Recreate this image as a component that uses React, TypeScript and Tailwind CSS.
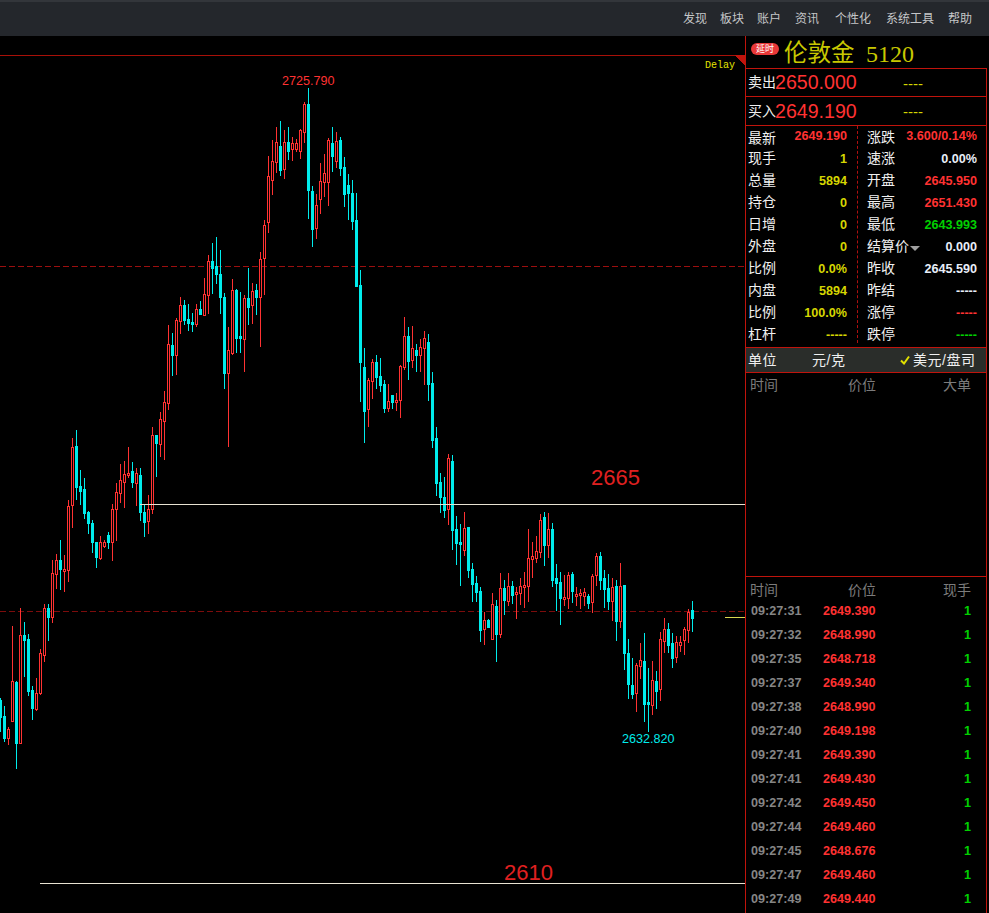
const RAW = `c 698 700 717 731
c 706 716 738 741
r 727 729 738 744
r 626 681 721 721
c 681 682 743 768
r 608 635 743 743
c 622 635 640 676
c 634 639 691 695
c 686 690 708 719
r 678 693 709 710
r 649 653 693 694
r 604 608 655 661
c 604 608 617 640
r 560 573 617 622
r 554 560 574 588
c 540 560 569 589
r 555 569 571 591
r 500 506 570 581
r 438 447 505 527
c 430 446 487 499
c 470 486 491 504
c 478 489 513 518
c 511 512 523 533
c 520 523 542 552
c 542 542 557 567
r 536 542 558 559
r 540 542 546 547
c 532 535 542 548
r 504 509 542 560
r 483 492 509 540
r 464 480 493 502
r 461 474 482 507
r 447 473 475 477
c 462 471 482 487
r 468 473 483 505
c 468 475 512 520
c 504 512 522 536
r 495 509 521 533
r 427 435 509 513
c 435 435 443 476
r 412 419 444 456
r 391 402 421 459
r 325 344 403 409
c 333 345 355 375
r 318 320 355 374
r 297 305 321 333
c 300 305 320 324
c 304 319 323 330
c 313 322 324 331
r 304 309 324 326
c 301 309 314 314
r 278 294 315 315
r 255 261 295 313
c 243 261 268 293
c 237 266 274 283
c 250 274 297 313
c 293 297 373 388
r 327 350 373 446
r 279 290 353 354
c 289 290 338 352
c 292 336 338 352
r 295 298 339 371
c 268 298 307 324
r 283 291 305 323
c 284 290 297 314
r 252 259 297 346
r 220 225 258 294
r 156 176 222 232
r 140 161 180 194
r 127 142 162 172
c 121 146 170 175
r 130 142 169 178
c 127 142 151 159
r 137 143 149 160
r 139 143 149 151
r 129 130 151 158
r 102 104 132 142
c 88 104 190 218
c 186 191 229 246
r 194 205 228 238
r 163 181 199 213
r 154 173 182 196
r 138 140 182 205
c 127 143 156 171
r 132 141 161 167
c 137 140 168 175
c 157 167 194 206
c 174 185 193 219
c 180 193 221 229
c 193 220 286 286
c 270 285 362 401
c 348 367 411 442
r 378 380 409 426
r 359 362 381 398
c 355 362 377 388
c 358 376 385 391
c 380 384 408 412
r 384 401 408 411
c 395 395 402 408
r 393 400 402 410
r 365 366 400 417
r 317 336 367 369
c 327 336 361 379
r 326 348 360 367
c 344 350 355 371
r 339 347 355 371
r 331 338 348 384
c 334 342 384 400
c 372 383 440 447
c 427 438 483 495
c 473 482 497 512
c 477 497 510 517
r 454 458 509 524
c 455 461 530 549
c 516 529 543 564
c 524 542 544 585
r 512 528 550 555
c 527 527 570 577
c 563 569 584 601
c 576 583 592 601
c 587 591 630 641
r 612 620 629 644
c 619 620 627 627
r 593 604 639 639
c 600 606 634 661
r 573 588 634 637
c 580 588 600 614
r 573 586 601 605
c 581 586 595 603
r 587 592 594 618
r 578 586 593 604
r 572 585 587 607
r 529 558 586 601
r 542 556 559 577
r 536 551 558 562
r 514 520 552 557
c 512 517 545 565
r 513 529 545 557
c 523 529 580 586
c 564 578 583 610
c 572 582 598 624
r 575 597 599 605
r 572 575 598 608
c 572 574 591 602
r 587 594 596 605
r 589 593 595 608
r 588 592 596 605
c 594 596 603 608
r 574 576 602 612
r 553 556 575 585
c 552 556 580 589
c 570 578 589 607
c 574 588 601 609
r 578 587 601 620
c 580 586 621 640
r 563 586 621 627
c 585 585 653 669
c 639 653 684 698
c 658 685 694 698
r 663 665 693 711
r 643 660 666 678
c 633 661 704 721
c 668 702 704 731
r 661 680 705 714
c 671 681 691 708
r 632 639 689 700
r 618 629 641 652
c 623 629 645 652
c 633 643 658 667
r 636 642 657 662
r 636 642 645 651
r 627 629 640 654
r 609 612 630 642
c 601 610 618 631`;

const candles = RAW.split("\n").map((line, i) => {
  const [c, a, b, d, e] = line.trim().split(" ");
  return { x: i * 4, red: c === "r", top: +a, bodyTop: +b, bodyBot: +d, bot: +e };
});

function Chart() {
  return (
    <svg width="745" height="877" viewBox="0 36 745 877" className="block" shapeRendering="crispEdges">
      <line x1="0" x2="745" y1="55.5" y2="55.5" stroke="#a81008" />
      <polygon points="735,55 745,55 745,66" fill="#c0140c" />
      <line x1="0" x2="745" y1="266.5" y2="266.5" stroke="#9c0f0f" strokeDasharray="6 3" />
      <line x1="0" x2="745" y1="611.5" y2="611.5" stroke="#7c0c0c" strokeDasharray="6 3" />
      {candles.map((k) => {
        const color = k.red ? "#ff3232" : "#00ecec";
        const h = k.bodyBot - k.bodyTop + 1;
        return (
          <g key={k.x}>
            <rect x={k.x} y={k.top} width="1" height={k.bot - k.top + 1} fill={color} />
            <rect x={k.x - 1} y={k.bodyTop} width="3" height={h} fill={color} />
            {k.red && h > 2 && <rect x={k.x} y={k.bodyTop + 1} width="1" height={h - 2} fill="#000" />}
          </g>
        );
      })}
      <line x1="140" x2="745" y1="504.5" y2="504.5" stroke="#e8e2d2" />
      <line x1="40" x2="745" y1="883.5" y2="883.5" stroke="#e8e2d2" />
      <line x1="725" x2="745" y1="617.5" y2="617.5" stroke="#d8d850" />
    </svg>
  );
}

const Y = "text-[#d6d600]";
const R = "text-[#ff3232]";
const W = "text-[#e8eef8]";
const G = "text-[#00d000]";

const stats: [string, string, string, string, string, string][] = [
  ["最新", "2649.190", R, "涨跌", "3.600/0.14%", R],
  ["现手", "1", Y, "速涨", "0.00%", W],
  ["总量", "5894", Y, "开盘", "2645.950", R],
  ["持仓", "0", Y, "最高", "2651.430", R],
  ["日增", "0", Y, "最低", "2643.993", G],
  ["外盘", "0", Y, "结算价", "0.000", W],
  ["比例", "0.0%", Y, "昨收", "2645.590", W],
  ["内盘", "5894", Y, "昨结", "-----", W],
  ["比例", "100.0%", Y, "涨停", "-----", R],
  ["杠杆", "-----", Y, "跌停", "-----", G],
];

const ticks: [string, string][] = [
  ["09:27:31", "2649.390"],
  ["09:27:32", "2648.990"],
  ["09:27:35", "2648.718"],
  ["09:27:37", "2649.340"],
  ["09:27:38", "2648.990"],
  ["09:27:40", "2649.198"],
  ["09:27:41", "2649.390"],
  ["09:27:41", "2649.430"],
  ["09:27:42", "2649.450"],
  ["09:27:44", "2649.460"],
  ["09:27:45", "2648.676"],
  ["09:27:47", "2649.460"],
  ["09:27:49", "2649.440"],
];

const menu: [string, string][] = [
  ["发现", "mr-[-1px]"],
  ["板块", "mr-[-1px]"],
  ["账户", ""],
  ["资讯", "mr-[2px]"],
  ["个性化", "mr-[1px]"],
  ["系统工具", ""],
  ["帮助", ""],
];

function QuoteRow({ label, price, cls }: { label: string; price: string; cls: string }) {
  return (
    <div className={"flex items-center border-b border-[#c0140c] pl-[2px] " + cls}>
      <span className="w-[27px] shrink-0 whitespace-nowrap text-[14px] text-[#f0f0f0]">{label}</span>
      <span className="w-[128px] shrink-0 pt-[1px] text-[19.6px] leading-none text-[#ff3232]">{price}</span>
      <span className="pt-[1px] text-[15px] leading-none text-[#d6d600]">----</span>
    </div>
  );
}

function ColumnHead({ a, b, c, cls }: { a: string; b: string; c: string; cls: string }) {
  return (
    <div className={"flex items-center pl-[4px] pr-[15px] text-[14px] leading-none text-[#7c7c7c] " + cls}>
      <span className="w-[98px]">{a}</span>
      <span className="flex-1">{b}</span>
      <span>{c}</span>
    </div>
  );
}

export default function App() {
  return (
    <div className="flex h-[913px] w-[989px] flex-col overflow-hidden bg-black font-['Liberation_Sans','Noto_Sans_CJK_SC',sans-serif]">
      <header className="flex h-[36px] shrink-0 items-center justify-end gap-[14px] border-t-2 border-[#33363b] bg-[#24272c] pr-[17px] text-[12px] leading-none text-[#c4c6c8]">
        {menu.map(([m, cls]) => (
          <span key={m} className={cls}>{m}</span>
        ))}
      </header>
      <div className="flex min-h-0 flex-1">
        <main className="relative w-[745px] shrink-0">
          <Chart />
          <span className="absolute left-[705px] top-[25px] font-['Liberation_Mono',monospace] text-[10px] leading-none text-[#e4e400]">Delay</span>
          <span className="absolute left-[282px] top-[39px] text-[12.6px] leading-none text-[#ff3232]">2725.790</span>
          <span className="absolute left-[622px] top-[697px] text-[12.6px] leading-none text-[#00ecec]">2632.820</span>
          <span className="absolute left-[591px] top-[431px] text-[22px] leading-none text-[#e02020]">2665</span>
          <span className="absolute left-[504px] top-[826px] text-[22px] leading-none text-[#e02020]">2610</span>
        </main>
        <aside className="mr-[2px] flex w-[242px] flex-col border-l border-[#c0140c]">
          <div className="flex h-[33px] shrink-0 items-center border-b border-[#c0140c] pl-[5px]">
            <span className="mb-[6px] flex h-[12px] w-[28px] items-center justify-center rounded-full bg-[#e83838] text-[9px] leading-none text-white">延时</span>
            <span className="ml-[5px] mt-[3px] w-[82px] font-['Liberation_Serif','Noto_Sans_CJK_SC',serif] text-[23.5px] leading-none text-[#c8c800]">伦敦金</span>
            <span className="mt-[3px] font-['Liberation_Serif',serif] text-[24px] leading-none text-[#c8c800]">5120</span>
          </div>
          <div className="flex min-h-0 flex-1 flex-col border-r border-[#c0140c]">
            <QuoteRow label="卖出" price="2650.000" cls="h-[28px]" />
            <QuoteRow label="买入" price="2649.190" cls="h-[29px]" />
            <div className="relative flex h-[221px] shrink-0 flex-col">
              <div className="absolute bottom-[4px] left-[111px] top-0 border-l border-dashed border-[#b01010]" />
              {stats.map(([l1, v1, c1, l2, v2, c2], i) => (
                <div key={l1 + l2} className="flex h-[22px] items-center pb-[2px] pl-[2px]">
                  <span className={"w-[40px] shrink-0 text-[14px] leading-none text-[#f0f0f0] " + (i === 0 ? "mt-[3px]" : "")}>{l1}</span>
                  <span className={"w-[59px] shrink-0 text-right text-[12.6px] font-bold leading-none " + c1 + (i === 0 ? "" : " mt-[3px]")}>{v1}</span>
                  <span className={"ml-[20px] flex w-[34px] shrink-0 items-center whitespace-nowrap text-[14px] leading-none text-[#f0f0f0] " + (i === 0 ? "mt-[1px]" : "")}>
                    {l2}
                    {l2 === "结算价" && (
                      <svg width="10" height="5" viewBox="0 0 10 5" className="ml-[1px] mt-[4px] shrink-0">
                        <polygon points="0,0 10,0 5,5" fill="#a0a0a0" />
                      </svg>
                    )}
                  </span>
                  <span className={"w-[76px] shrink-0 text-right text-[12.6px] font-bold leading-none " + c2 + (i === 0 ? "" : " mt-[3px]")}>{v2}</span>
                </div>
              ))}
            </div>
            <div className="flex h-[26px] shrink-0 items-center border-y border-[#c0140c] bg-[#2a2d2a] pl-[2px] text-[14px] leading-none tracking-[0.5px] text-[#f0f0f0]">
              <span className="w-[64px]">单位</span>
              <span className="w-[88px]">元/克</span>
              <svg width="10" height="10" viewBox="0 0 10 10" className="mr-[3px] shrink-0">
                <path d="M1 5.5 L4 8.5 L9 1.5" fill="none" stroke="#e0e000" strokeWidth="2" />
              </svg>
              <span>美元/盘司</span>
            </div>
            <div className="h-[204px] shrink-0 border-b border-[#c0140c]">
              <ColumnHead a="时间" b="价位" c="大单" cls="h-[24px]" />
            </div>
            <ColumnHead a="时间" b="价位" c="现手" cls="h-[23px] pt-[2px]" />
            <div className="flex flex-col">
              {ticks.map(([t, p], i) => (
                <div key={i} className={"flex items-center pl-[5px] pr-[15px] text-[12.6px] font-bold leading-none " + (i === 0 ? "h-[23px]" : "h-[24px]")}>
                  <span className="w-[72px] text-[#868686]">{t}</span>
                  <span className="flex-1 text-[#ff3232]">{p}</span>
                  <span className="text-[#00d000]">1</span>
                </div>
              ))}
            </div>
          </div>
        </aside>
      </div>
    </div>
  );
}
